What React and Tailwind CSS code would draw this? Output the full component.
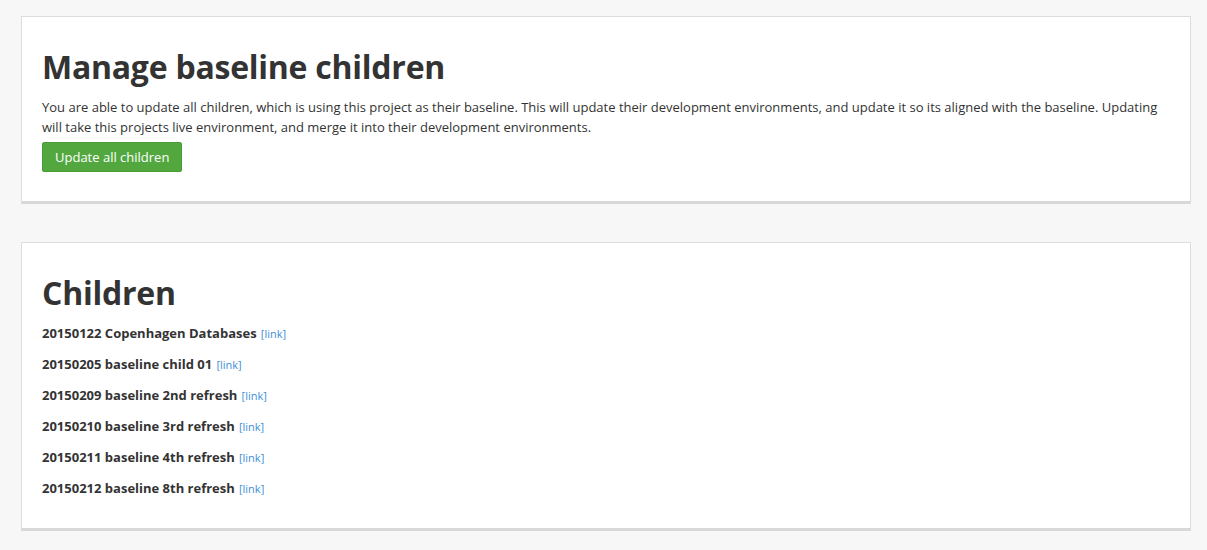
export default function App() {
  const children = [
    '20150122 Copenhagen Databases',
    '20150205 baseline child 01',
    '20150209 baseline 2nd refresh',
    '20150210 baseline 3rd refresh',
    '20150211 baseline 4th refresh',
    '20150212 baseline 8th refresh',
  ];

  return (
    <div
      className="min-h-[550px] bg-[#f7f7f7] pt-[16px] text-[#333]"
      style={{ fontFamily: '"Open Sans", "Liberation Sans", sans-serif' }}
    >
      <div className="ml-[21px] w-[1170px] flex flex-col gap-[38px]">
        {/* Manage baseline children */}
        <div className="bg-white border border-[#dddddd] border-b-[3px] border-b-[#d8d8d8] px-[20px] pt-[32px] pb-[29px]">
          <h1 className="text-[32px] leading-[35px] font-bold tracking-[-0.25px] mb-[13px]">Manage baseline children</h1>
          <p className="text-[13px] leading-[20px]">
            You are able to update all children, which is using this project as their baseline. This will update their development environments, and update it so its aligned with the baseline. Updating will take this projects live environment, and merge it into their development environments.
          </p>
          <button className="mt-[5px] h-[30px] px-[12px] pt-[1px] bg-[#52a83f] border border-[#4a9a38] rounded-[2px] text-white text-[13px]">
            Update all children
          </button>
        </div>

        {/* Children */}
        <div className="bg-white border border-[#dddddd] border-b-[3px] border-b-[#d8d8d8] px-[20px] pt-[32px] pb-[31px]">
          <h1 className="text-[32px] leading-[35px] font-bold tracking-[-0.25px] mb-[12px]">Children</h1>
          <div className="flex flex-col gap-[11px]">
            {children.map((name, i) => (
              <div key={i} className="h-[20px] leading-[20px] whitespace-nowrap">
                <span className="text-[13px] font-bold">{name}</span>{' '}
                <a href="#" className="text-[11px] leading-[20px] text-[#3b8fd6]">[link]</a>
              </div>
            ))}
          </div>
        </div>
      </div>
    </div>
  );
}
